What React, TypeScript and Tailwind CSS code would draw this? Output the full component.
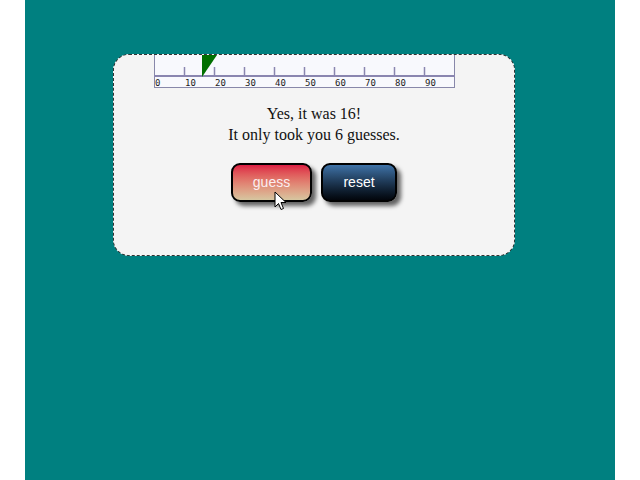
import { JSX } from "react";

const ticks = [10, 20, 30, 40, 50, 60, 70, 80, 90];
const labels = [0, 10, 20, 30, 40, 50, 60, 70, 80, 90];

function Ruler({ value }: { value: number }): JSX.Element {
    const x = value * 3;
    return (
        <svg width="301" height="33" className="block">
            <rect x="0.5" y="-1" width="300" height="33.5" fill="#f8f9fd" stroke="#8888aa" />
            <line x1="0" y1="21" x2="301" y2="21" stroke="#8a86b0" strokeWidth="2" />
            {ticks.map((t) => (
                <line key={t} x1={t * 3 + 0.5} y1="12" x2={t * 3 + 0.5} y2="21" stroke="#8a86b0" strokeWidth="1.5" />
            ))}
            <polygon points={`${x},0 ${x + 15},0 ${x},22`} fill="#007000" />
            {labels.map((l) => (
                <text
                    key={l}
                    x={l * 3 + 1}
                    y="30.5"
                    fontSize="9"
                    fill="#222"
                    fontFamily="'DejaVu Sans Mono', monospace"
                >
                    {String(l)}
                </text>
            ))}
        </svg>
    );
}

function Cursor(): JSX.Element {
    return (
        <svg width="14" height="21" viewBox="0 0 14 21" className="absolute left-[43px] top-[28px]">
            <path d="M1 1 L1 16 L4.5 12.5 L7 18.5 L9.5 17.5 L7 11.5 L12 11.5 Z" fill="#fff" stroke="#000" strokeWidth="1" strokeLinejoin="round" />
        </svg>
    );
}

export default function App(): JSX.Element {
    return (
        <div className="min-h-[480px] w-full bg-white">
            <div className="mx-auto h-[480px] w-[590px] bg-[#008080] pt-[54px] pl-[88px]">
                <div className="h-[202px] w-[402px] rounded-[16px] border border-dashed border-[#333] bg-[#f4f4f4]">
                    <div className="ml-[40px]">
                        <Ruler value={16} />
                    </div>
                    <div
                        className="mt-[15px] text-center text-[16px] leading-[21px] text-[#111]"
                        style={{ fontFamily: "'Liberation Serif', serif" }}
                    >
                        <div>Yes, it was 16!</div>
                        <div>It only took you 6 guesses.</div>
                    </div>
                    <div
                        className="mt-[18px] flex justify-center gap-[9px]"
                        style={{ fontFamily: "'Liberation Sans', Arial, sans-serif" }}
                    >
                        <div className="relative">
                            <button className="h-[39px] w-[81px] rounded-[9px] border-2 border-black bg-gradient-to-b from-[#dc1a44] to-[#d6c6a0] text-[14px] text-[#fbeef0] shadow-[4px_4px_4px_rgba(0,0,0,0.6)]">
                                guess
                            </button>
                            <Cursor />
                        </div>
                        <button className="h-[39px] w-[76px] rounded-[9px] border-2 border-black bg-gradient-to-b from-[#3f73a8] to-[#03060c] text-[14px] text-white shadow-[4px_4px_4px_rgba(0,0,0,0.6)]">
                            reset
                        </button>
                    </div>
                </div>
            </div>
        </div>
    );
}
